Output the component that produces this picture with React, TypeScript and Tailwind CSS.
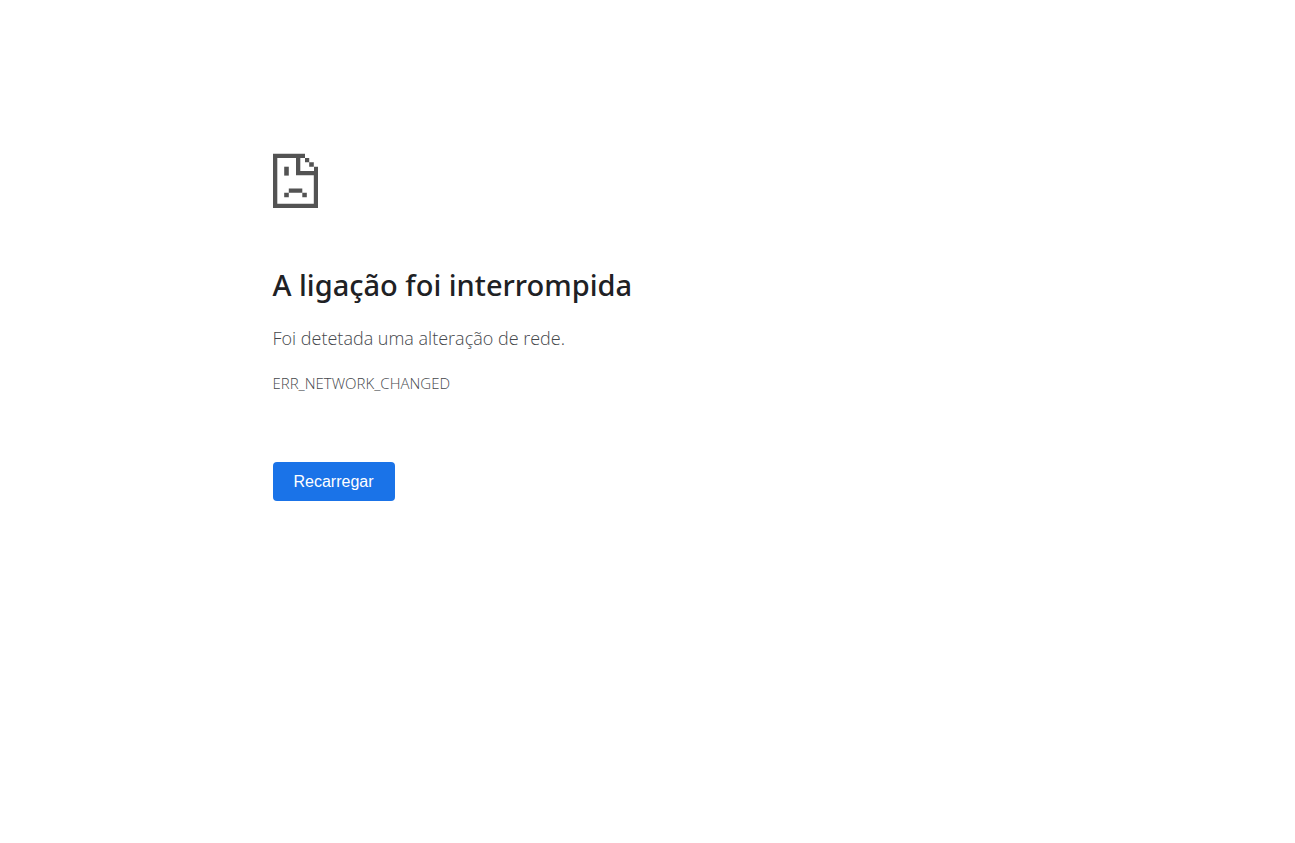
export default function App() {
  return (
    <main className="min-h-screen bg-white px-6 font-['Open_Sans','Noto_Sans',sans-serif] text-[#45484c]">
      <div className="mx-auto w-full max-w-[750px] pt-[153px]">
        <svg
          className="block h-[55px] w-[45px]"
          viewBox="0 0 45 55"
          fill="#535353"
          aria-hidden="true"
        >
          <path d="M0 .7H32V5H27.3V18H41V13.7H45V55H0ZM4.3 5V50.7H40.8V22.3H23V5Z" fillRule="evenodd" />
          <path d="M32 5H36.2V9.3H32ZM36.2 9.3H40.8V13.7H36.2Z" />
          <path d="M11.2 13.7H15.8V22.6H11.2Z" />
          <path d="M15.8 35.4H29.3V39.8H15.8ZM11.2 39.8H15.8V44.2H11.2ZM29.3 39.8H33.8V44.2H29.3Z" />
        </svg>
        <h1 className="mt-14 font-['Noto_Sans','Open_Sans',sans-serif] text-[29px] leading-[42px] font-medium text-[#202124]">
          A ligação foi interrompida
        </h1>
        <p className="mt-[18px] text-lg leading-7 font-light">Foi detetada uma alteração de rede.</p>
        <p className="mt-5 text-[15px] leading-[22px] font-light">ERR_NETWORK_CHANGED</p>
        <button
          type="button"
          className="mt-17 h-[39px] rounded bg-[#1a73e8] px-[21px] font-['Liberation_Sans',sans-serif] text-base text-white"
        >
          Recarregar
        </button>
      </div>
    </main>
  );
}
